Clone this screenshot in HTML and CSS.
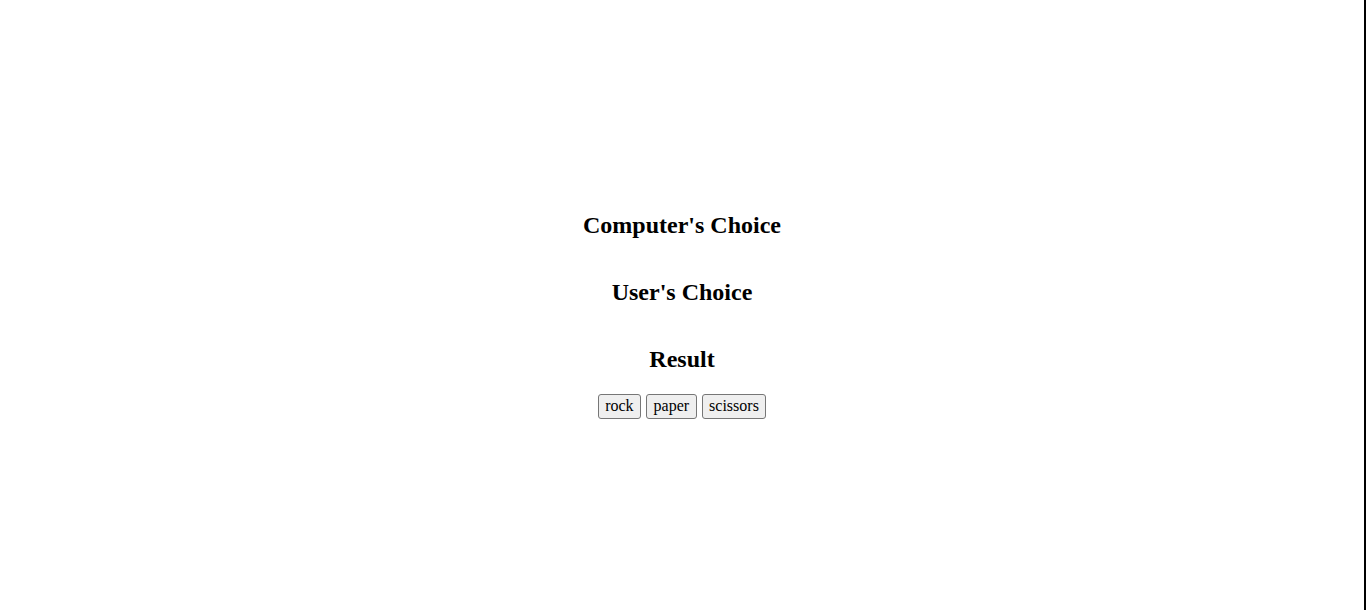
FILE: index.html
```html
<!DOCTYPE html>
<html>
<head>
<meta charset="utf-8">
<title>Rock Paper Scissors</title>
<link rel="stylesheet" href="styles.css">
</head>
<body>
<div class="page">
  <h2 class="title">Computer's Choice</h2>
  <h2 class="title">User's Choice</h2>
  <h2 class="title">Result</h2>
  <div class="choices">
    <button class="choice">rock</button>
    <button class="choice">paper</button>
    <button class="choice">scissors</button>
  </div>
</div>
</body>
</html>
```
FILE: styles.css
```css
html, body {
  margin: 0;
  padding: 0;
  background: #ffffff;
}
body {
  font-family: "Liberation Serif", "Times New Roman", serif;
  color: #000000;
}
.page {
  box-sizing: border-box;
  height: 100vh;
  padding-top: 1px;
  border-right: 2px solid #000000;
  display: flex;
  flex-direction: column;
  align-items: center;
  justify-content: center;
}
.title {
  font-size: 24px;
  font-weight: bold;
  margin: 19.92px 0;
  line-height: 27.6px;
}
.choices {
  display: flex;
  gap: 5px;
}
.choice {
  font-family: "Liberation Serif", "Times New Roman", serif;
  font-size: 16px;
  line-height: 18.4px;
  color: #000000;
  background: #efefef;
  border: 1px solid #767676;
  border-radius: 3px;
  padding: 2px 6.5px 3px;
  margin: 0;
}
```
